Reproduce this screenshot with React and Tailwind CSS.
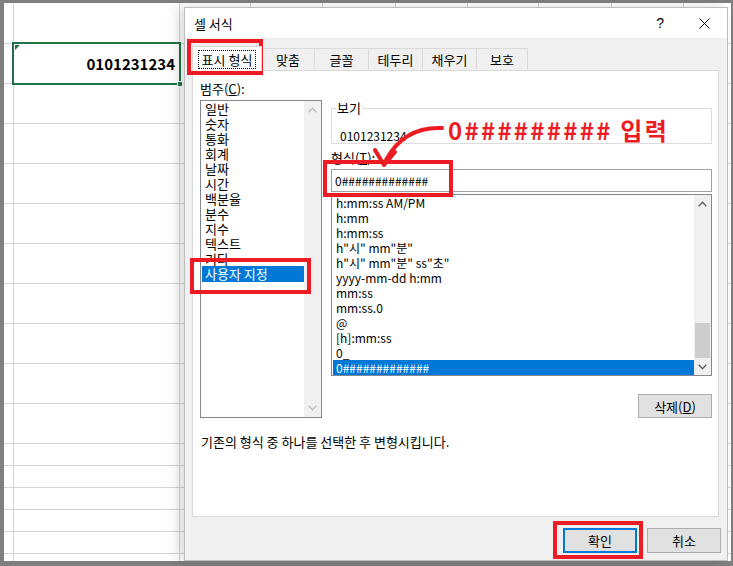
import React from "react";

const FONT = "font-['Noto_Sans_CJK_KR','Noto_Sans',sans-serif]";

const colWidths = [10, 166, 71, 72, 73, 72, 71, 73, 72, 48];
const rowHeights = [41, 40, 40, 40, 40, 40, 40, 40, 40, 40, 40, 22, 22, 22, 22, 22, 8];

const categories = ["일반", "숫자", "통화", "회계", "날짜", "시간", "백분율", "분수", "지수", "텍스트", "기타", "사용자 지정"];
const formats = [
  "h:mm:ss AM/PM",
  "h:mm",
  "h:mm:ss",
  'h"시" mm"분"',
  'h"시" mm"분" ss"초"',
  "yyyy-mm-dd h:mm",
  "mm:ss",
  "mm:ss.0",
  "@",
  "[h]:mm:ss",
  "0_",
  "0#############",
];
const tabs = ["맞춤", "글꼴", "테두리", "채우기", "보호"];
const tabWidths = ["w-[53px]", "w-[54px]", "w-[54px]", "w-[54px]", "w-[51px]"];

function ChevUp({ color }) {
  return (
    <svg width="9" height="6" viewBox="0 0 9 6" className={color}>
      <polyline points="0.7,5.2 4.5,1.2 8.3,5.2" fill="none" stroke="currentColor" strokeWidth="1.4" />
    </svg>
  );
}
function ChevDown({ color }) {
  return (
    <svg width="9" height="6" viewBox="0 0 9 6" className={color}>
      <polyline points="0.7,0.8 4.5,4.8 8.3,0.8" fill="none" stroke="currentColor" strokeWidth="1.4" />
    </svg>
  );
}

function Sheet() {
  return (
    <div className="relative w-[727px] h-[558px] bg-white overflow-hidden">
      {rowHeights.map((h, r) => (
        <div key={r} className="flex border-b border-[#d4d4d4]" style={{ height: h }}>
          {colWidths.map((w, c) => (
            <div key={c} className="h-full border-r border-[#d4d4d4] shrink-0" style={{ width: w }} />
          ))}
        </div>
      ))}
      {/* selected cell */}
      <div className="absolute left-[8px] top-[39px] w-[169px] h-[43px] border-2 border-[#217346] flex items-center justify-end pr-[4px]">
        <span className={`${FONT} text-[15px] font-bold text-black leading-none`}>0101231234</span>
        <div className="absolute left-[1px] top-[1px] w-0 h-0 border-t-[5px] border-r-[5px] border-t-[#217346] border-r-transparent" />
        <div className="absolute -right-[4px] -bottom-[4px] w-[6px] h-[6px] bg-[#217346] border border-white" />
      </div>
    </div>
  );
}

function CategoryList() {
  return (
    <div className="h-[318px] border border-[#828790] bg-white flex">
      <div className="flex-1 flex flex-col pl-[1px]">
        {categories.map((c, i) => (
          <div
            key={c}
            className={`shrink-0 flex items-center pl-[3px] text-[13px] ${
              i === categories.length - 1 ? "bg-[#0078d7] text-white h-[16px] leading-[16px]" : "text-black h-[15px] leading-[15px]"
            }`}
          >
            {c}
          </div>
        ))}
      </div>
      <div className="w-[17px] bg-[#f0f0f0] flex flex-col items-center justify-between py-[6px]">
        <ChevUp color="text-[#c0c0c0]" />
        <ChevDown color="text-[#c0c0c0]" />
      </div>
    </div>
  );
}

function FormatList() {
  return (
    <div className="h-[182px] border border-[#828790] bg-white flex">
      <div className="flex-1 flex flex-col pl-[1px]">
        {formats.map((f, i) => (
          <div
            key={i}
            className={`h-[15px] shrink-0 flex items-center pl-[3px] text-[12px] leading-[15px] whitespace-pre ${
              i === formats.length - 1 ? "bg-[#0078d7] text-white" : "text-black"
            }`}
          >
            {f}
          </div>
        ))}
      </div>
      <div className="w-[17px] bg-[#f0f0f0] flex flex-col items-center">
        <div className="h-[17px] flex items-center justify-center">
          <ChevUp color="text-[#606060]" />
        </div>
        <div className="flex-1" />
        <div className="w-[15px] h-[35px] bg-[#cdcdcd]" />
        <div className="h-[17px] flex items-center justify-center">
          <ChevDown color="text-[#606060]" />
        </div>
      </div>
    </div>
  );
}

function Dialog() {
  return (
    <div className={`absolute left-[184px] top-[7px] w-[544px] h-[554px] flex flex-col border border-[#bdbdbd] shadow-[-6px_0_12px_rgba(0,0,0,0.14)] ${FONT}`}>
      {/* title bar */}
      <div className="h-[30px] shrink-0 bg-white flex items-center pl-[9px] pr-[17px]">
        <span className="text-[13px] text-black leading-none">셀 서식</span>
        <span className="ml-auto text-[14px] text-black leading-none font-['Liberation_Sans',sans-serif]">?</span>
        <svg width="11" height="11" viewBox="0 0 11 11" className="ml-[35px]">
          <path d="M0.5 0.5 L10.5 10.5 M10.5 0.5 L0.5 10.5" stroke="#000" strokeWidth="1" fill="none" />
        </svg>
      </div>

      {/* body */}
      <div className="flex-1 bg-[#f0f0f0] flex flex-col pt-[10px] pl-[7px] pr-[8px]">
        {/* tabs */}
        <div className="h-[22px] flex items-end shrink-0">
          <div className="relative z-10 w-[70px] h-[25px] -mb-[1px] bg-white border border-b-0 border-[#d9d9d9] flex items-center justify-center">
            <div className="border border-dotted border-black px-[3px] h-[19px] flex items-center text-[13px] leading-none">표시 형식</div>
          </div>
          {tabs.map((t, i) => (
            <div
              key={t}
              className={`${tabWidths[i]} h-[22px] bg-[#f0f0f0] border border-l-0 border-b-0 border-[#d9d9d9] flex items-center justify-center text-[13px] leading-none`}
            >
              {t}
            </div>
          ))}
        </div>

        {/* pane */}
        <div className="h-[447px] shrink-0 bg-white border border-[#d9d9d9] flex flex-col">
          <div className="flex pl-[7px] pr-[6px] gap-[9px]">
            {/* left column */}
            <div className="w-[122px] flex flex-col">
              <div className="mt-[10px] h-[15px] flex items-center text-[13px] leading-none">
                범주(<span className="underline">C</span>):
              </div>
              <div className="mt-[4px]">
                <CategoryList />
              </div>
            </div>
            {/* right column */}
            <div className="flex-1 flex flex-col">
              <div className="mt-[37px] h-[36px] border border-[#dcdcdc] relative pl-[8px] pt-[13px]">
                <span className="absolute -top-[10px] left-[4px] bg-white px-[1px] text-[13px] leading-[17px]">보기</span>
                <span className="text-[12px] leading-[16px]">0101231234</span>
              </div>
              <div className="mt-[6px] h-[15px] flex items-center text-[13px] leading-none">
                형식(<span className="underline">T</span>):
              </div>
              <div className="mt-[4px] h-[23px] border border-[#a0a0a0] flex items-center pl-[3px] text-[12px] leading-none">
                0#############
              </div>
              <div className="mt-[2px]">
                <FormatList />
              </div>
              <div className="mt-[18px] self-end w-[74px] h-[24px] bg-[#e1e1e1] border border-[#adadad] flex items-center justify-center text-[13px] leading-none">
                삭제(<span className="underline">D</span>)
              </div>
            </div>
          </div>
          <div className="mt-[16px] pl-[8px] text-[13px] leading-[16px] text-black">
            기존의 형식 중 하나를 선택한 후 변형시킵니다.
          </div>
        </div>

        {/* buttons */}
        <div className="mt-[11px] flex justify-end gap-[10px] -mr-[2px]">
          <div className="w-[74px] h-[25px] bg-[#e1e1e1] border-2 border-[#0078d7] flex items-center justify-center text-[13px] leading-none">
            확인
          </div>
          <div className="w-[74px] h-[25px] bg-[#e1e1e1] border border-[#adadad] flex items-center justify-center text-[13px] leading-none">
            취소
          </div>
        </div>
      </div>
    </div>
  );
}

export default function App() {
  return (
    <div className="relative w-[733px] h-[566px] bg-[#7f7f7f] overflow-hidden">
      <div className="pl-[4px] pt-[3px]">
        <Sheet />
      </div>
      <Dialog />

      {/* annotations */}
      <div className="absolute left-[187px] top-[39px] w-[76px] h-[36px] border-4 border-[#ed1c24]" />
      <div className="absolute left-[190px] top-[258px] w-[121px] h-[36px] border-4 border-[#ed1c24]" />
      <div className="absolute left-[323px] top-[160px] w-[130px] h-[37px] border-4 border-[#ed1c24]" />
      <div className="absolute left-[553px] top-[521px] w-[90px] h-[38px] border-4 border-[#ed1c24]" />

      <svg className="absolute left-0 top-0" width="733" height="566" viewBox="0 0 733 566">
        <path d="M442 128 C 420 127, 400 134, 386 160" fill="none" stroke="#ed1c24" strokeWidth="4" strokeLinecap="round" />
        <path d="M375 150 L384 165 L395 152" fill="none" stroke="#ed1c24" strokeWidth="4" strokeLinecap="round" strokeLinejoin="round" />
      </svg>
      <div className={`absolute left-[448px] top-[115px] h-[30px] flex items-center text-[24px] font-bold tracking-[2.3px] text-[#ed1c24] leading-none ${FONT}`}>
        0######### 입력
      </div>
    </div>
  );
}
